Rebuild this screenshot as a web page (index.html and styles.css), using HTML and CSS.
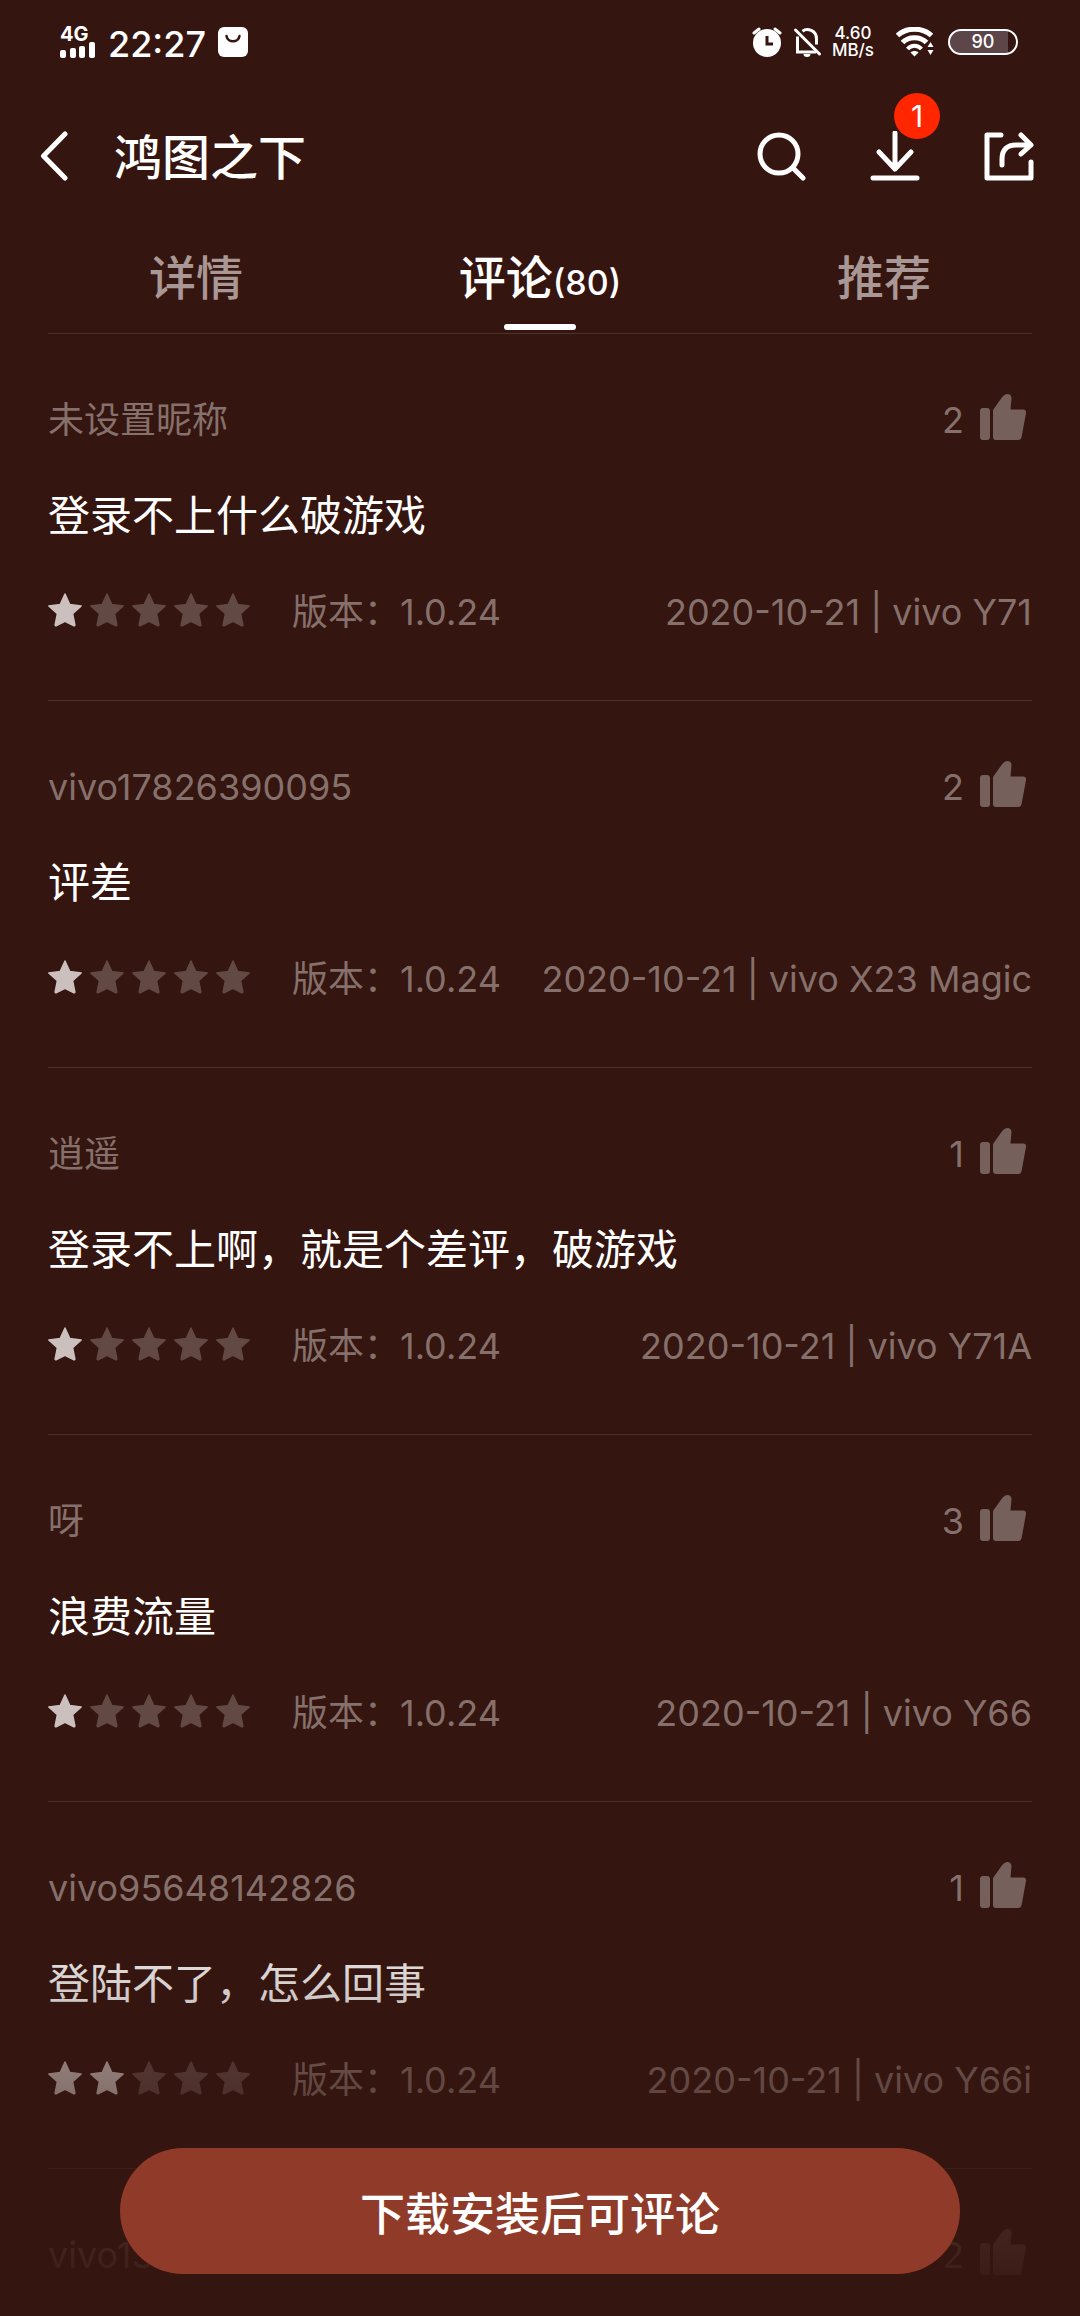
FILE: index.html
```html
<!DOCTYPE html>
<html lang="zh-CN">
<head>
  <meta charset="UTF-8" />
  <meta name="viewport" content="width=device-width, initial-scale=1.0"/>
  <title>鸿图之下</title>
  <link rel="stylesheet" href="styles.css">
</head>
<body>

  <!-- Shared icons -->
  <svg class="icon-defs" aria-hidden="true">
    <symbol id="star" viewBox="0 0 34 34">
      <path d="M17 1l4.800 10.600 11.400 1.400-8.600 7.700 2.300 11.500-.9.700-9-4.600-9 4.600-.9-.7 2.300-11.500L.8 13l11.400-1.400z" fill="currentColor" stroke="currentColor" stroke-width="1.500" stroke-linejoin="round"/>
    </symbol>
    <symbol id="thumb" viewBox="0 0 46 46">
      <rect x="0" y="14" width="10" height="32" rx="3" fill="currentColor"/>
      <path d="M13 17c0-1 .3-1.600.9-2.300L21.500 4C23.500 1.300 25.500 0 27.500 0c2.500 0 4 1.700 4 4.300L30.500 15.500H43c2.200 0 3.300 1.400 3 3.500L41.700 42.500c-.4 2.400-1.500 3.500-3.700 3.500H16c-2 0-3-1-3-3z" fill="currentColor"/>
    </symbol>
  </svg>

  <div class="app">

    <!-- Phone status bar -->
    <div class="status-bar">
      <div class="status-left">
        <div class="signal">
          <span class="signal-type">4G</span>
          <svg class="signal-bars" viewBox="0 0 36 16" fill="#fff">
            <rect x="0" y="8" width="6" height="8" rx="2"/>
            <rect x="10" y="6" width="6" height="10" rx="2"/>
            <rect x="19" y="4" width="6" height="12" rx="2"/>
            <rect x="29" y="0" width="6" height="16" rx="2"/>
          </svg>
        </div>
        <span class="clock">22:27</span>
        <svg class="bag-icon" viewBox="0 0 30 30">
          <rect width="30" height="30" rx="6" fill="#fff"/>
          <path d="M8.500 9c1 7 12 7 13 0" fill="none" stroke="#35150f" stroke-width="2.500" stroke-linecap="round"/>
        </svg>
      </div>
      <div class="status-right">
        <svg class="status-icon" viewBox="0 0 30 30">
          <circle cx="15" cy="16" r="14" fill="#fff"/>
          <path d="M2 6l5-4M28 6l-5-4" stroke="#fff" stroke-width="3" stroke-linecap="round"/>
          <path d="M15 9v8h6" fill="none" stroke="#35150f" stroke-width="3"/>
        </svg>
        <svg class="status-icon" viewBox="0 0 30 30" fill="none" stroke="#fff" stroke-width="3">
          <path d="M5.500 9.500V25H24M10.500 4.200C15 .8 24.500 3 24.500 12v5.500"/>
          <path d="M3.500 3l24 24" stroke-linecap="round"/>
          <path d="M11.500 27h7a3.500 3 0 0 1-7 0z" fill="#fff" stroke="none"/>
        </svg>
        <div class="speed">
          <span>4.60</span>
          <span>MB/s</span>
        </div>
        <svg class="wifi-icon" viewBox="0 0 38 30">
          <g fill="none" stroke="#fff" stroke-width="5">
            <path d="M1.500 8.500c9-8.500 25-8.500 34 0"/>
            <path d="M6.500 15.500c6-6.500 18-6.500 24 0"/>
            <path d="M11.500 22c4-4.500 10-4.500 14 0" stroke-width="4"/>
          </g>
          <path d="M14.500 25.500c2-2 6-2 8 0l-4 4z" fill="#fff"/>
          <path d="M34.500 15l3 5h-6zM34.500 28l3-5h-6z" fill="#fff"/>
        </svg>
        <div class="battery"><span>90</span></div>
      </div>
    </div>

    <!-- Title bar -->
    <header class="title-bar">
      <button class="icon-button" aria-label="返回">
        <svg class="back-icon" viewBox="0 0 28 50"><path d="M25 3L3.500 25 25 47" fill="none" stroke="#fff" stroke-width="5" stroke-linecap="round" stroke-linejoin="round"/></svg>
      </button>
      <h1>鸿图之下</h1>
      <div class="actions">
        <button class="icon-button" aria-label="搜索">
          <svg class="action-icon" viewBox="0 0 50 50" fill="none" stroke="#fff" stroke-width="5" stroke-linecap="round">
            <circle cx="23" cy="23" r="19"/>
            <path d="M37 37l10 10"/>
          </svg>
        </button>
        <button class="icon-button" aria-label="下载">
          <svg class="action-icon" viewBox="0 0 50 50" fill="none" stroke="#fff" stroke-width="5" stroke-linecap="round" stroke-linejoin="round">
            <path d="M25 2v36M9 21l16 17 16-17M3 47h44"/>
          </svg>
          <span class="badge">1</span>
        </button>
        <button class="icon-button" aria-label="分享">
          <svg class="action-icon" viewBox="0 0 50 50" fill="none" stroke="#fff" stroke-width="5" stroke-linecap="round" stroke-linejoin="round">
            <path d="M17 4H3v43h44V31"/>
            <path d="M18 34v-6c0-9 5-14 14-14h14M37 4l10 10-10 9"/>
          </svg>
        </button>
      </div>
    </header>

    <!-- Tabs -->
    <nav class="tabs">
      <a href="#detail" class="tab">详情</a>
      <a href="#comments" class="tab active">评论<small>(80)</small></a>
      <a href="#recommend" class="tab">推荐</a>
    </nav>

    <!-- Comment list -->
    <main class="comments" id="comments">
      <article class="comment">
        <div class="comment-head">
          <span>未设置昵称</span>
          <button class="like">2<svg><use href="#thumb"/></svg></button>
        </div>
        <p class="comment-text">登录不上什么破游戏</p>
        <div class="comment-meta">
          <div class="stars">
            <svg class="on"><use href="#star"/></svg>
            <svg><use href="#star"/></svg>
            <svg><use href="#star"/></svg>
            <svg><use href="#star"/></svg>
            <svg><use href="#star"/></svg>
          </div>
          <span>版本：1.0.24</span>
          <span class="device">2020-10-21 | vivo Y71</span>
        </div>
      </article>

      <article class="comment">
        <div class="comment-head">
          <span>vivo17826390095</span>
          <button class="like">2<svg><use href="#thumb"/></svg></button>
        </div>
        <p class="comment-text">评差</p>
        <div class="comment-meta">
          <div class="stars">
            <svg class="on"><use href="#star"/></svg>
            <svg><use href="#star"/></svg>
            <svg><use href="#star"/></svg>
            <svg><use href="#star"/></svg>
            <svg><use href="#star"/></svg>
          </div>
          <span>版本：1.0.24</span>
          <span class="device">2020-10-21 | vivo X23 Magic</span>
        </div>
      </article>

      <article class="comment">
        <div class="comment-head">
          <span>逍遥</span>
          <button class="like">1<svg><use href="#thumb"/></svg></button>
        </div>
        <p class="comment-text">登录不上啊，就是个差评，破游戏</p>
        <div class="comment-meta">
          <div class="stars">
            <svg class="on"><use href="#star"/></svg>
            <svg><use href="#star"/></svg>
            <svg><use href="#star"/></svg>
            <svg><use href="#star"/></svg>
            <svg><use href="#star"/></svg>
          </div>
          <span>版本：1.0.24</span>
          <span class="device">2020-10-21 | vivo Y71A</span>
        </div>
      </article>

      <article class="comment">
        <div class="comment-head">
          <span>呀</span>
          <button class="like">3<svg><use href="#thumb"/></svg></button>
        </div>
        <p class="comment-text">浪费流量</p>
        <div class="comment-meta">
          <div class="stars">
            <svg class="on"><use href="#star"/></svg>
            <svg><use href="#star"/></svg>
            <svg><use href="#star"/></svg>
            <svg><use href="#star"/></svg>
            <svg><use href="#star"/></svg>
          </div>
          <span>版本：1.0.24</span>
          <span class="device">2020-10-21 | vivo Y66</span>
        </div>
      </article>

      <article class="comment">
        <div class="comment-head">
          <span>vivo95648142826</span>
          <button class="like">1<svg><use href="#thumb"/></svg></button>
        </div>
        <p class="comment-text">登陆不了，怎么回事</p>
        <div class="comment-meta">
          <div class="stars">
            <svg class="on"><use href="#star"/></svg>
            <svg class="on"><use href="#star"/></svg>
            <svg><use href="#star"/></svg>
            <svg><use href="#star"/></svg>
            <svg><use href="#star"/></svg>
          </div>
          <span>版本：1.0.24</span>
          <span class="device">2020-10-21 | vivo Y66i</span>
        </div>
      </article>

      <article class="comment">
        <div class="comment-head">
          <span>vivo13</span>
          <button class="like">2<svg><use href="#thumb"/></svg></button>
        </div>
      </article>
    </main>

    <div class="bottom-bar">
      <button class="install-button">下载安装后可评论</button>
    </div>
  </div>

</body>
</html>
```
FILE: styles.css
```css
*, *::before, *::after {
  box-sizing: border-box;
}

body, html {
  margin: 0;
  padding: 0;
  height: 100%;
  background: #35150f;
  color: #fff;
  font-family: Inter, 'Noto Sans CJK SC', sans-serif;
}

button {
  margin: 0;
  padding: 0;
  border: none;
  background: none;
  color: inherit;
  font: inherit;
  cursor: pointer;
}

svg {
  display: block;
}

.icon-defs {
  position: absolute;
  width: 0;
  height: 0;
}

.app {
  position: relative;
  display: flex;
  flex-direction: column;
  height: 100vh;
  overflow: hidden;
}

/* status bar */
.status-bar {
  flex: none;
  display: flex;
  justify-content: space-between;
  align-items: center;
  height: 84px;
  padding: 0 62px 0 60px;
}

.status-left, .status-right {
  display: flex;
  align-items: center;
}

.status-left {
  gap: 12px;
}

.status-right {
  gap: 10px;
}

.signal-type {
  display: block;
  font-size: 20px;
  line-height: 15px;
  font-weight: 700;
}

.signal-bars {
  width: 36px;
  height: 16px;
}

.clock {
  padding-top: 4px;
  font-size: 36px;
  line-height: 40px;
  font-weight: 500;
}

.bag-icon, .status-icon {
  width: 30px;
  height: 30px;
}

.speed {
  font-size: 17px;
  line-height: 17px;
  font-weight: 500;
  text-align: center;
}

.speed span {
  display: block;
}

.wifi-icon {
  width: 38px;
  height: 30px;
  margin: 0 4px 0 12px;
}

.battery {
  width: 70px;
  height: 26px;
  border: 2px solid #fff;
  border-radius: 13px;
  background: linear-gradient(90deg, #5d464a 88%, #35150f 88%);
  font-size: 18px;
  line-height: 22px;
  font-weight: 500;
  text-align: center;
}

/* title bar */
.title-bar {
  flex: none;
  display: flex;
  align-items: center;
  height: 144px;
  padding: 0 46px 0 40px;
}

.icon-button {
  position: relative;
}

.back-icon {
  width: 28px;
  height: 50px;
}

h1 {
  margin: 0 0 0 46px;
  padding-top: 4px;
  font-size: 48px;
  line-height: 60px;
  font-weight: 500;
}

.actions {
  display: flex;
  gap: 64px;
  margin-left: auto;
}

.action-icon {
  width: 50px;
  height: 50px;
}

.badge {
  position: absolute;
  top: -38px;
  left: 24px;
  width: 46px;
  height: 46px;
  border-radius: 50%;
  background: #ff2600;
  font-size: 30px;
  line-height: 46px;
  text-align: center;
}

/* tabs */
.tabs {
  flex: none;
  display: grid;
  grid-template-columns: 1fr 1fr 1fr;
  height: 105px;
  margin: 0 24px;
}

.tab {
  position: relative;
  color: #a99795;
  font-size: 47px;
  line-height: 100px;
  font-weight: 500;
  text-align: center;
  text-decoration: none;
}

.tab small {
  font-size: 34px;
}

.tab.active {
  color: #fff;
}

.tab.active::after {
  content: "";
  position: absolute;
  bottom: 3px;
  left: 50%;
  width: 72px;
  height: 6px;
  margin-left: -36px;
  border-radius: 3px;
  background: #fff;
}

/* comments */
.comments {
  flex: 1;
  min-height: 0;
  overflow: hidden;
  padding: 0 48px;
}

.comment {
  padding: 58px 0 60px;
  border-top: 1px solid #4e302b;
  color: #85706c;
  font-size: 36px;
  line-height: 56px;
}

.comment-head, .comment-meta {
  display: flex;
  justify-content: space-between;
  align-items: center;
  height: 56px;
}

.like {
  display: flex;
  align-items: center;
  gap: 16px;
  padding-right: 6px;
}

.like svg {
  width: 46px;
  height: 46px;
  margin-bottom: 6px;
  color: #76605b;
}

.comment-text {
  margin: 36px 0;
  color: #fff;
  font-size: 42px;
  line-height: 64px;
}

.stars {
  display: flex;
  gap: 8px;
  margin: 0 42px 4px 0;
}

.stars svg {
  width: 34px;
  height: 34px;
  color: #634944;
}

.stars .on {
  color: #cbc0be;
}

.device {
  margin-left: auto;
}

/* install bar over the end of the list */
.bottom-bar {
  position: absolute;
  left: 0;
  right: 0;
  bottom: 0;
  padding: 248px 120px 42px;
  background: linear-gradient(rgba(53, 21, 15, 0), #35150f);
  pointer-events: none;
}

.install-button {
  width: 100%;
  height: 126px;
  border-radius: 63px;
  background: #903b29;
  font-size: 45px;
  font-weight: 500;
  pointer-events: auto;
}
```
